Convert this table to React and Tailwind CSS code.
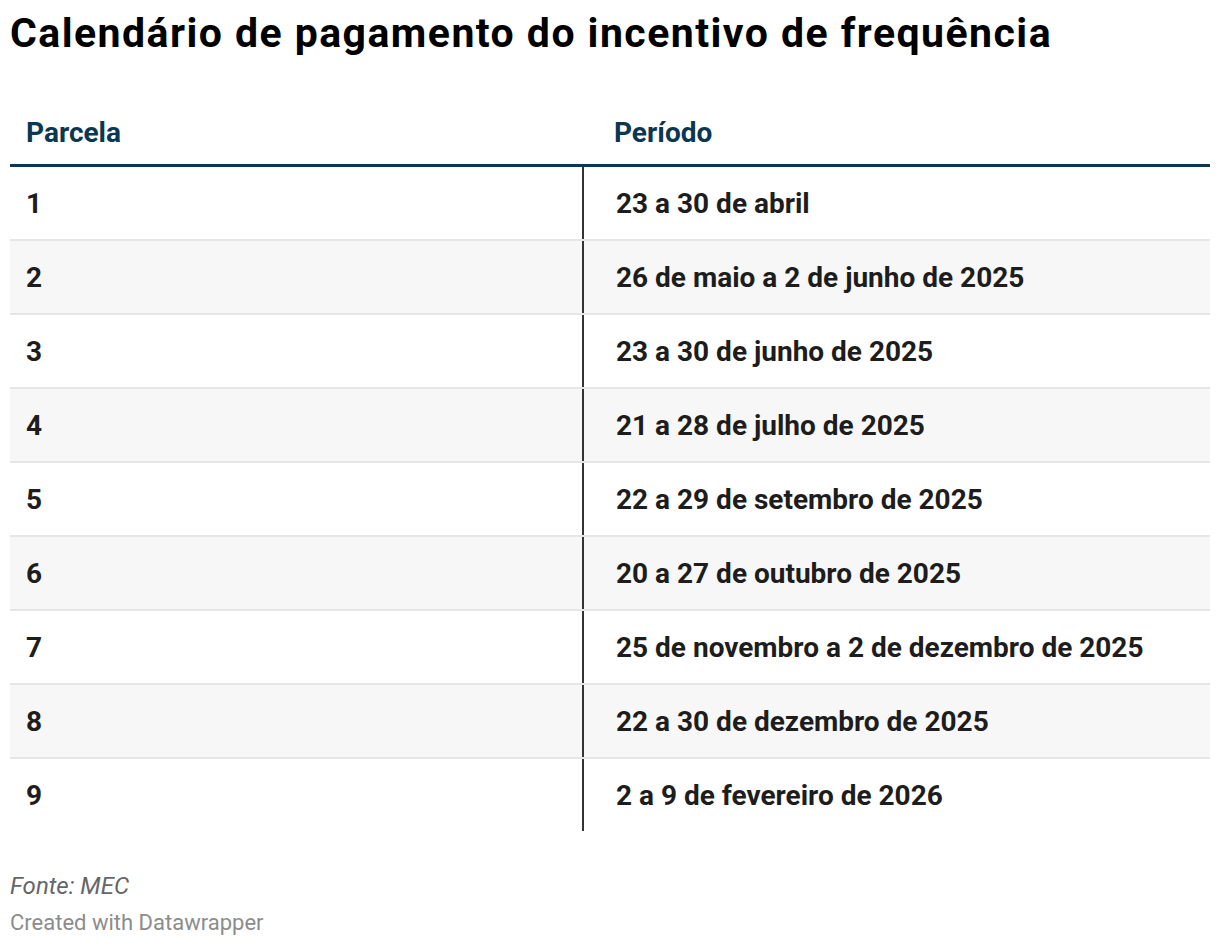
import React from 'react';

const rows = [
  ['1', '23 a 30 de abril'],
  ['2', '26 de maio a 2 de junho de 2025'],
  ['3', '23 a 30 de junho de 2025'],
  ['4', '21 a 28 de julho de 2025'],
  ['5', '22 a 29 de setembro de 2025'],
  ['6', '20 a 27 de outubro de 2025'],
  ['7', '25 de novembro a 2 de dezembro de 2025'],
  ['8', '22 a 30 de dezembro de 2025'],
  ['9', '2 a 9 de fevereiro de 2026'],
];

export default function App() {
  return (
    <div className="w-[1220px] h-[946px] bg-white px-[10px] pt-[9px] font-['Roboto',sans-serif]">
      {/* Title */}
      <h1 className="text-[41px] leading-[48px] font-bold text-[#000] tracking-[1.45px]">
        Calendário de pagamento do incentivo de frequência
      </h1>

      {/* Table */}
      <div className="mt-[58px] w-[1200px]">
        <div className="flex h-[52px] items-start pt-[2px] border-b-[3px] border-[#0b3752] text-[28px] font-bold text-[#0b3752] leading-[32px]">
          <div className="w-[572px] pl-[16px]">Parcela</div>
          <div className="flex-1 pl-[32px]">Período</div>
        </div>
        {rows.map(([n, p], i) => {
          const last = i === rows.length - 1;
          return (
            <div
              key={n}
              className={`flex text-[28px] leading-[32px] font-bold text-[#1d1d1d] ${i % 2 === 1 ? 'bg-[#f7f7f7]' : 'bg-white'} ${last ? 'h-[72px]' : 'h-[74px] border-b-2 border-[#e6e6e6]'}`}
            >
              <div className="w-[572px] pl-[16px] pt-[2px] flex items-center">{n}</div>
              <div className="flex-1 pl-[32px] pt-[2px] flex items-center border-l-2 border-[#333333]">{p}</div>
            </div>
          );
        })}
      </div>

      {/* Footer */}
      <div className="mt-[40px] text-[24px] italic text-[#666666] leading-[30px]">Fonte: MEC</div>
      <div className="mt-[8px] text-[22px] text-[#8c8c8c] leading-[28px]">Created with Datawrapper</div>
    </div>
  );
}
